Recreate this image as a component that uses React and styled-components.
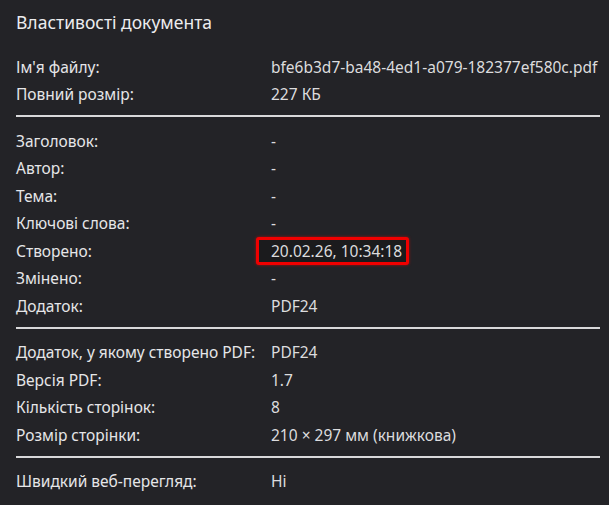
import React from "react";
import styled, { createGlobalStyle } from "styled-components";

const GlobalStyle = createGlobalStyle`
  html, body {
    margin: 0;
    padding: 0;
    background: #232327;
  }
  body {
    font-family: "Noto Sans", "Open Sans", sans-serif;
    color: #e2e2e4;
  }
`;

const sections = [
  [
    ["Ім'я файлу:", "bfe6b3d7-ba48-4ed1-a079-182377ef580c.pdf"],
    ["Повний розмір:", "227 КБ"],
  ],
  [
    ["Заголовок:", "-"],
    ["Автор:", "-"],
    ["Тема:", "-"],
    ["Ключові слова:", "-"],
    ["Створено:", "20.02.26, 10:34:18", true],
    ["Змінено:", "-"],
    ["Додаток:", "PDF24"],
  ],
  [
    ["Додаток, у якому створено PDF:", "PDF24"],
    ["Версія PDF:", "1.7"],
    ["Кількість сторінок:", "8"],
    ["Розмір сторінки:", "210 × 297 мм (книжкова)"],
  ],
  [["Швидкий веб-перегляд:", "Ні"]],
];

const App = () => {
  return (
    <Wrapper>
      <GlobalStyle />
      <Title>Властивості документа</Title>
      {sections.map((rows, i) => (
        <React.Fragment key={i}>
          {i > 0 && <Divider />}
          <Section>
            {rows.map(([label, value, marked]) => (
              <Row key={label}>
                <Label>{label}</Label>
                <Value>{marked ? <Marked>{value}</Marked> : value}</Value>
              </Row>
            ))}
          </Section>
        </React.Fragment>
      ))}
    </Wrapper>
  );
};

export default App;

const Wrapper = styled.div`
  width: 609px;
  height: 505px;
  box-sizing: border-box;
  padding: 0 9px 0 16px;
  overflow: hidden;
`;

const Title = styled.h1`
  margin: 0;
  padding-top: 10px;
  height: 53px;
  box-sizing: border-box;
  font-size: 17.5px;
  font-weight: 400;
  line-height: 24px;
  color: #ececee;
`;

const Section = styled.div`
  display: flex;
  flex-direction: column;
`;

const Row = styled.div`
  display: grid;
  grid-template-columns: 255px 1fr;
  height: 27.5px;
  align-items: center;
  font-size: 15.5px;
  white-space: nowrap;
`;

const Label = styled.span`
  color: #e6e6e8;
`;

const Value = styled.span`
  color: #dcdcde;
`;

const Marked = styled.span`
  display: inline-block;
  margin-left: -15px;
  padding: 0 4px 0 12px;
  border: 3px solid #f00000;
  border-radius: 3px;
  background: #1b1b1d;
  box-shadow: 0 0 3px rgba(255, 0, 0, 0.6);
`;

const Divider = styled.hr`
  margin: 7px 0 10px;
  border: none;
  border-top: 2px solid #d8d8da;
`;
